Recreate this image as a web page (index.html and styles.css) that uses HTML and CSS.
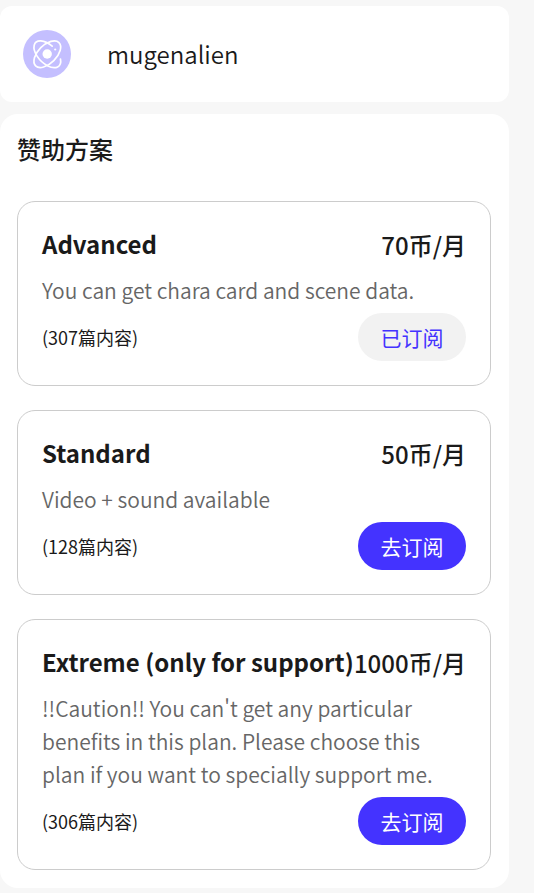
FILE: index.html
```html
<!DOCTYPE html>
<html lang="zh-CN">
<head>
<meta charset="utf-8">
<title>赞助方案</title>
<link rel="stylesheet" href="styles.css">
</head>
<body>
<main class="page">
  <header class="creator">
    <svg class="avatar" viewBox="0 0 48 48" aria-hidden="true">
      <circle cx="24" cy="24" r="24" fill="#c4bfff"/>
      <g fill="none" stroke="#fff" stroke-width="1.7" stroke-linecap="round">
        <ellipse cx="0" cy="0" rx="16.500" ry="9.200" transform="translate(24.300 24.200) rotate(-45)"/>
        <path d="M12.700 -5.900A16.500 9.200 0 1 1 -2.200 -9.100" transform="translate(24.300 24.200) rotate(45)"/>
      </g>
      <circle cx="24.200" cy="24" r="4.700" fill="#fff"/>
      <circle cx="32.200" cy="19.500" r="1.100" fill="#fff"/>
    </svg>
    <span class="creator-name">mugenalien</span>
  </header>
  <section class="plans">
    <h1 class="heading">赞助方案</h1>
    <article class="plan">
      <div class="row top"><h2 class="name">Advanced</h2><span class="price">70币/月</span></div>
      <p class="description">You can get chara card and scene data.</p>
      <div class="row"><span class="count">(307篇内容)</span><button class="button subscribed">已订阅</button></div>
    </article>
    <article class="plan">
      <div class="row top"><h2 class="name">Standard</h2><span class="price">50币/月</span></div>
      <p class="description">Video + sound available</p>
      <div class="row"><span class="count">(128篇内容)</span><button class="button">去订阅</button></div>
    </article>
    <article class="plan">
      <div class="row top"><h2 class="name">Extreme (only for support)</h2><span class="price">1000币/月</span></div>
      <p class="description">!!Caution!! You can't get any particular benefits in this plan. Please choose this plan if you want to specially support me.</p>
      <div class="row"><span class="count">(306篇内容)</span><button class="button">去订阅</button></div>
    </article>
  </section>
</main>
</body>
</html>
```
FILE: styles.css
```css
* { box-sizing: border-box; margin: 0; padding: 0; }
body {
  background: #f7f7f7;
  color: #1a1a1a;
  font-family: "Noto Sans CJK SC", sans-serif;
}
.page {
  display: flex;
  flex-direction: column;
  gap: 12px;
  width: 509px;
  padding-top: 6px;
}
.creator {
  display: flex;
  align-items: center;
  gap: 36px;
  height: 96px;
  padding: 0 23px;
  border-radius: 12px;
  background: #fff;
}
.avatar { width: 48px; height: 48px; }
.creator-name { font-size: 24px; line-height: 36px; font-weight: 350; }
.plans {
  display: flex;
  flex-direction: column;
  gap: 24px;
  height: 774px;
  padding: 17px 18px 18px 17px;
  border-radius: 18px;
  background: #fff;
}
.heading { flex: none; height: 46px; font-size: 24px; line-height: 36px; font-weight: 500; }
.plan {
  flex: none;
  padding: 25px 24px 24px;
  border: 1px solid #ccc;
  border-radius: 18px;
}
.row { display: flex; align-items: center; justify-content: space-between; white-space: nowrap; }
.top { height: 36px; margin-bottom: 11px; }
.name { font-size: 24px; line-height: 36px; font-weight: 700; margin-top: -2px; }
.price { font-size: 24px; line-height: 36px; font-weight: 500; }
.description { width: 396px; color: #666; font-size: 21px; line-height: 33px; font-weight: 350; margin-bottom: 6px; }
.count { font-size: 18px; line-height: 27px; }
.button {
  width: 108px;
  height: 48px;
  border: 0;
  border-radius: 24px;
  background: #4433ff;
  color: #fff;
  font: 400 21px/30px "Noto Sans CJK SC", sans-serif;
}
.subscribed { background: #f2f2f2; color: #4433ff; }
```
